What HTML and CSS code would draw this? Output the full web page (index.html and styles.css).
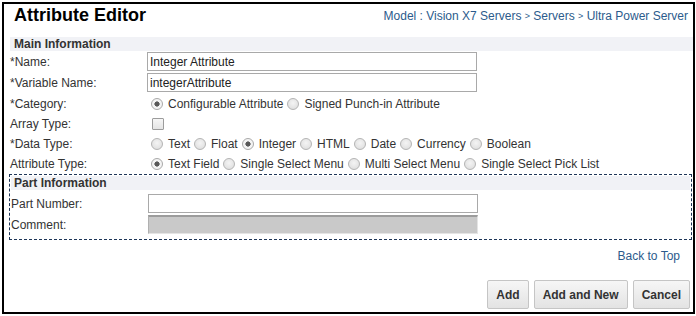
FILE: index.html
```html
<!DOCTYPE html>
<html>
<head>
<meta charset="utf-8">
<title>Attribute Editor</title>
<link rel="stylesheet" href="styles.css">
</head>
<body>
<div class="frame">
  <div class="header">
    <h1 class="title">Attribute Editor</h1>
    <div class="crumbs">Model : Vision X7 Servers <span class="sep">&gt;</span> Servers <span class="sep">&gt;</span> Ultra Power Server</div>
  </div>
  <div class="content">
    <div class="band">Main Information</div>
    <div class="form">
      <div class="row tall">
        <div class="lbl">*Name:</div>
        <div class="field"><input class="txt" type="text" value="Integer Attribute"></div>
      </div>
      <div class="row tall">
        <div class="lbl">*Variable Name:</div>
        <div class="field"><input class="txt" type="text" value="integerAttribute"></div>
      </div>
      <div class="row first-opt">
        <div class="lbl">*Category:</div>
        <div class="field opts">
          <label class="opt"><input class="rad" type="radio" name="cat" checked><span>Configurable Attribute</span></label>
          <label class="opt"><input class="rad" type="radio" name="cat"><span>Signed Punch-in Attribute</span></label>
        </div>
      </div>
      <div class="row">
        <div class="lbl">Array Type:</div>
        <div class="field"><input class="chk" type="checkbox"></div>
      </div>
      <div class="row">
        <div class="lbl">*Data Type:</div>
        <div class="field opts">
          <label class="opt"><input class="rad" type="radio" name="dt"><span>Text</span></label>
          <label class="opt"><input class="rad" type="radio" name="dt"><span>Float</span></label>
          <label class="opt"><input class="rad" type="radio" name="dt" checked><span>Integer</span></label>
          <label class="opt"><input class="rad" type="radio" name="dt"><span>HTML</span></label>
          <label class="opt"><input class="rad" type="radio" name="dt"><span>Date</span></label>
          <label class="opt"><input class="rad" type="radio" name="dt"><span>Currency</span></label>
          <label class="opt"><input class="rad" type="radio" name="dt"><span>Boolean</span></label>
        </div>
      </div>
      <div class="row">
        <div class="lbl">Attribute Type:</div>
        <div class="field opts">
          <label class="opt"><input class="rad" type="radio" name="at" checked><span>Text Field</span></label>
          <label class="opt"><input class="rad" type="radio" name="at"><span>Single Select Menu</span></label>
          <label class="opt"><input class="rad" type="radio" name="at"><span>Multi Select Menu</span></label>
          <label class="opt"><input class="rad" type="radio" name="at"><span>Single Select Pick List</span></label>
        </div>
      </div>
    </div>
    <div class="part">
      <div class="band band-part">Part Information</div>
      <div class="row tall">
        <div class="lbl">Part Number:</div>
        <div class="field"><input class="txt" type="text" value=""></div>
      </div>
      <div class="row tall">
        <div class="lbl">Comment:</div>
        <div class="field"><input class="txt disabled" type="text" value="" disabled></div>
      </div>
    </div>
    <div class="back"><a href="#" class="link">Back to Top</a></div>
    <div class="actions">
      <button class="btn" type="button">Add</button>
      <button class="btn" type="button">Add and New</button>
      <button class="btn" type="button">Cancel</button>
    </div>
  </div>
</div>
</body>
</html>
```

FILE: styles.css
```css
html, body {
  margin: 0;
  padding: 0;
  background: #fff;
}
body {
  font-family: "Liberation Sans", Arial, sans-serif;
  font-size: 12px;
  color: #333;
}
.frame {
  box-sizing: border-box;
  width: 693px;
  height: 312px;
  margin: 2px 1px 2px 2px;
  border: 2px solid #000;
  display: flex;
  flex-direction: column;
}
.header {
  height: 33px;
  display: flex;
  justify-content: space-between;
  align-items: flex-start;
  padding: 0 5px 0 10px;
}
.title {
  margin: 1px 0 0 0;
  font-size: 18px;
  line-height: 21px;
  font-weight: bold;
  color: #000;
}
.crumbs {
  margin-top: 5px;
  font-size: 12px;
  line-height: 14px;
  color: #2c5b8c;
}
.crumbs .sep {
  font-size: 9px;
  vertical-align: 1px;
}
.content {
  padding-left: 6px;
  display: flex;
  flex-direction: column;
  flex: 1;
}
.band {
  height: 14px;
  line-height: 14px;
  background: #f1f2f6;
  font-weight: bold;
  color: #333;
  padding-left: 4px;
}
.form {
  display: flex;
  flex-direction: column;
}
.row {
  display: flex;
  align-items: center;
  height: 20px;
}
.row.tall {
  height: 21px;
}
.row.first-opt {
  height: 21px;
  padding-top: 1px;
  box-sizing: border-box;
}
.lbl {
  width: 137px;
  flex: none;
  line-height: 14px;
}
.field {
  display: flex;
  align-items: center;
}
.txt {
  box-sizing: border-box;
  width: 330px;
  height: 19px;
  margin: 0;
  padding: 0 2px;
  border: 1px solid #a9a9a9;
  font-family: "Liberation Sans", Arial, sans-serif;
  font-size: 12px;
  color: #222;
  background: #fff;
  outline: none;
}
.txt.disabled {
  background: #c9c9c9;
  border: 1px solid #e4e4e4;
  border-top: 2px solid #9c9c9c;
  border-left: 1px solid #b0b0b0;
}
.opts {
  gap: 4px;
  padding-left: 4px;
}
.opt {
  display: inline-flex;
  align-items: center;
  gap: 5px;
  line-height: 14px;
}
.rad {
  -webkit-appearance: none;
  appearance: none;
  box-sizing: border-box;
  width: 12px;
  height: 12px;
  margin: 0;
  border-radius: 50%;
  border: 1px solid #b4b4b4;
  background: radial-gradient(circle at 50% 40%, #f4f4f4 0%, #e2e2e2 70%, #d6d6d6 100%);
}
.rad:checked {
  background: radial-gradient(circle, #555 0, #5a5a5a 2.3px, #f3f3f3 2.9px, #f6f6f6 100%);
  border-color: #a9a9a9;
}
.chk {
  -webkit-appearance: none;
  appearance: none;
  box-sizing: border-box;
  width: 12px;
  height: 12px;
  margin: 0 0 0 5px;
  border: 1px solid #9c9c9c;
  border-radius: 1px;
  background: linear-gradient(#f6f6f6, #e4e4e4);
}
.part {
  margin: 0 1px 0 -1px;
  border: 1px dashed #1d3557;
  padding: 1px 1px 4px 1px;
  display: flex;
  flex-direction: column;
}
.band-part {
  padding-left: 3px;
  margin-bottom: 3px;
}
.back {
  margin-top: 9px;
  line-height: 14px;
  text-align: right;
  padding-right: 13px;
}
.link {
  color: #2c5b8c;
  text-decoration: none;
}
.actions {
  margin-top: 17px;
  display: flex;
  justify-content: flex-end;
  gap: 5px;
  padding-right: 3px;
}
.btn {
  box-sizing: border-box;
  height: 29px;
  margin: 0;
  padding: 0 8px;
  font-family: "Liberation Sans", Arial, sans-serif;
  font-size: 12px;
  font-weight: bold;
  color: #333;
  background: linear-gradient(#f6f6f6, #e3e3e3);
  border: 1px solid #c5c5c5;
  border-radius: 2px;
}
```
